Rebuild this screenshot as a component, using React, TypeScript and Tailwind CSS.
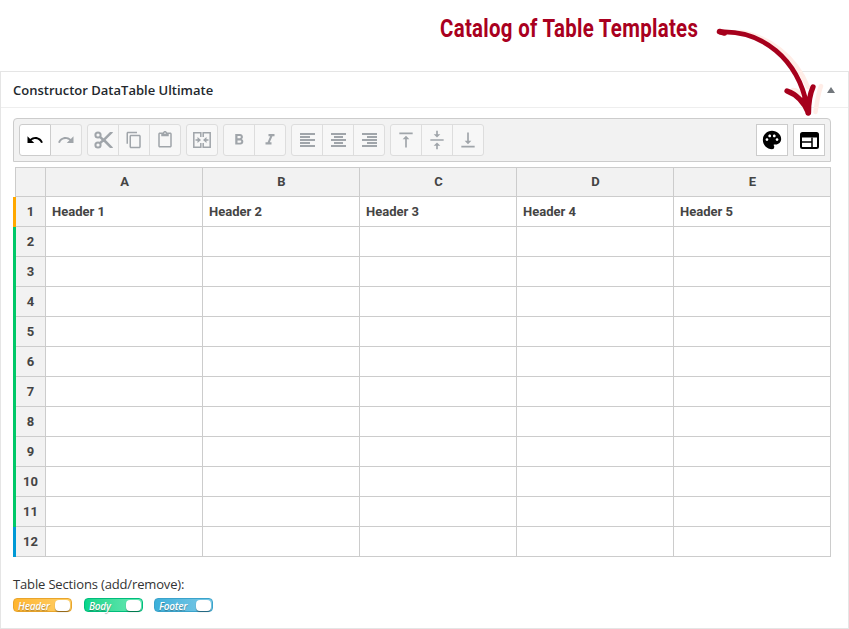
import React from "react";
import { MdUndo, MdRedo, MdContentCopy, MdContentPaste, MdFormatBold, MdFormatItalic, MdPalette, MdVerticalAlignTop, MdVerticalAlignCenter, MdVerticalAlignBottom } from "react-icons/md";

const columns = ["A", "B", "C", "D", "E"];
const rows = Array.from({ length: 12 }, (_, i) => i + 1);

function Group({ children }: { children: React.ReactNode }) {
  return (
    <div className="flex h-8 divide-x divide-[#dddddd] rounded-[3px] border border-[#dddddd] bg-[#f7f7f7] text-[#a0a5aa]">
      {children}
    </div>
  );
}

function Btn({ children }: { children: React.ReactNode }) {
  return <button className="flex w-[31px] items-center justify-center last:w-[30px]">{children}</button>;
}

function Lines({ rows }: { rows: [number, number][] }) {
  return (
    <svg className="ml-px" width="15" height="14" viewBox="0 0 15 14" fill="currentColor" shapeRendering="crispEdges">
      {rows.map(([x, w], i) => (
        <rect key={i} x={x} y={i * 3} width={w} height={2} />
      ))}
    </svg>
  );
}

function Scissors() {
  return (
    <svg className="ml-px" width="19" height="18" viewBox="0 0 19 18" fill="none" stroke="currentColor" strokeWidth="2">
      <circle cx="4" cy="4" r="2.600" />
      <circle cx="4" cy="14" r="2.600" />
      <path d="M6 5.800L10.500 10M6 12.200L9.500 9" strokeWidth="2.400" />
      <path d="M8 9L16 1h2.800v.8L10 10.500zM9.500 10.500l1.800-1.900 7.500 7.600v.8H16z" fill="currentColor" stroke="none" />
    </svg>
  );
}

function Merge() {
  return (
    <svg width="18" height="16" viewBox="0 0 18 16" fill="none" stroke="currentColor" strokeWidth="1.500">
      <path d="M7.800 5V.8H.8v14.400h7V11M10.200 5V.8h7v14.400h-7V11" />
      <path d="M2.500 8H6M15.500 8H12" />
      <path d="M4.500 5l3.500 3-3.500 3zM13.500 5L10 8l3.500 3z" fill="currentColor" stroke="none" />
    </svg>
  );
}

function Layout() {
  return (
    <svg width="19" height="17" viewBox="0 0 19 17" fill="none" stroke="black">
      <rect x="1" y="1" width="17" height="15" rx="1.500" strokeWidth="2" />
      <path d="M1 3.500h17" strokeWidth="4" />
      <path d="M2 10h9.500M12 5.500V15" strokeWidth="1.500" />
    </svg>
  );
}

function Toggle({ label, colors }: { label: string; colors: string }) {
  return (
    <button className={`flex h-[14px] w-[59px] items-center justify-between rounded-[4px] border pl-1 ${colors}`}>
      <span className="pt-px font-['Open_Sans',sans-serif] text-[10px] leading-3 font-semibold tracking-[-0.25px] text-white italic [text-shadow:0_1px_1px_#0005]">{label}</span>
      <span className="mr-px h-[11px] w-[15px] shrink-0 rounded-[4px] bg-white shadow-[0_1px_1px_#0006]" />
    </button>
  );
}

export default function App() {
  return (
    <div className="relative h-[629px] w-[849px] bg-white pt-[71px] font-['Open_Sans',sans-serif]">
      <h1 className="absolute top-[9px] left-[440px] origin-left scale-x-[0.77] font-[Roboto,sans-serif] text-[26.5px] leading-[38px] font-bold tracking-[0.4px] whitespace-nowrap text-[#a90020]">
        Catalog of Table Templates
      </h1>
      <section className="h-[558px] border border-[#e5e5e5]">
        <header className="flex h-9 items-center justify-between border-b border-[#eeeeee] pr-[13px] pl-3">
          <h2 className="pt-[2px] text-[13px] font-semibold text-[#23282d]">Constructor DataTable Ultimate</h2>
          <svg width="8" height="6" viewBox="0 0 8 6" fill="#72777c"><path d="M4 0l4 6H0z" /></svg>
        </header>
        <div className="px-3 pt-[10px]">
          <div className="flex h-11 w-[818px] gap-[5px] rounded-t-[4px] border border-[#cccccc] bg-[#f2f2f2] p-[5px]">
            <div className="flex h-8">
              <button className="flex w-8 items-center justify-center rounded-l-[3px] border border-[#cccccc] bg-white text-black"><MdUndo size={18} /></button>
              <button className="flex w-[31px] items-center justify-center rounded-r-[3px] border border-l-0 border-[#dddddd] bg-[#f7f7f7] text-[#a0a5aa]"><MdRedo size={18} /></button>
            </div>
            <Group><Btn><Scissors /></Btn><Btn><MdContentCopy size={18} /></Btn><Btn><MdContentPaste size={18} /></Btn></Group>
            <Group><Btn><Merge /></Btn></Group>
            <Group><Btn><MdFormatBold size={18} /></Btn><Btn><MdFormatItalic size={18} /></Btn></Group>
            <Group>
              <Btn><Lines rows={[[0, 15], [0, 10], [0, 15], [0, 10], [0, 15]]} /></Btn>
              <Btn><Lines rows={[[0, 15], [3, 9], [0, 15], [3, 9], [0, 15]]} /></Btn>
              <Btn><Lines rows={[[0, 15], [5, 10], [0, 15], [5, 10], [0, 15]]} /></Btn>
            </Group>
            <Group><Btn><MdVerticalAlignTop size={20} /></Btn><Btn><MdVerticalAlignCenter size={20} /></Btn><Btn><MdVerticalAlignBottom size={20} /></Btn></Group>
            <button className="ml-auto flex h-8 w-8 items-center justify-center border border-[#cccccc] bg-white"><MdPalette size={22} /></button>
            <button className="flex h-8 w-8 items-center justify-center border border-[#cccccc] bg-white"><Layout /></button>
          </div>
          <div className="mt-[5px] w-[818px] font-[Roboto,sans-serif] text-[13px] font-bold text-[#444444]">
            <div className="ml-[2px] flex h-[30px] border border-[#cccccc] bg-[#f2f2f2]">
              <div className="w-[30px] border-r border-[#cccccc]" />
              {columns.map((c) => (
                <div key={c} className="flex w-[157px] items-center justify-center border-r border-[#cccccc] pl-px last:w-[156px] last:border-r-0">{c}</div>
              ))}
            </div>
            {rows.map((r) => (
              <div key={r} className="flex h-[30px]">
                <div className={`w-[3px] ${r === 1 ? "bg-[#ffa800]" : r === 12 ? "bg-[#0099d5]" : "bg-[#00c868]"}`} />
                <div className="flex w-[30px] items-center justify-center border-r border-b border-[#cccccc] bg-[#f2f2f2]">{r}</div>
                {columns.map((c, i) => (
                  <div key={c} className="flex w-[157px] items-center border-r border-b border-[#cccccc] pl-[6px]">{r === 1 && `Header ${i + 1}`}</div>
                ))}
              </div>
            ))}
          </div>
          <p className="mt-[17px] text-[13px] leading-5 tracking-[-0.15px] text-[#333333]">Table Sections (add/remove):</p>
          <div className="mt-1 flex gap-[11px]">
            <div className="pr-px">
              <Toggle label="Header" colors="border-[#e9a52c] bg-gradient-to-r from-[#ffb52d] to-[#ffd067]" />
            </div>
            <Toggle label="Body" colors="border-[#00bd7c] bg-gradient-to-r from-[#00d68a] to-[#68e8b6]" />
            <Toggle label="Footer" colors="border-[#3aa3cb] bg-gradient-to-r from-[#3bb0da] to-[#7cc9e6]" />
          </div>
        </div>
      </section>
      <svg className="absolute top-[10px] left-[700px]" width="149" height="120" viewBox="0 0 149 120" fill="none" strokeLinecap="round" strokeLinejoin="round">
        <path d="M40 22C68 26 95 46 108 77M93 80c5 0 9 4 12 8M121 76c-3 8-4 16-5.500 26" stroke="#ffede7" strokeWidth="4.500" />
        <path d="M20 22C62 20 98 49 107 96" stroke="#a6001c" strokeWidth="4.800" />
        <path d="M19.500 21.500l5 1.500" stroke="#a6001c" strokeWidth="5.500" />
        <path d="M87 81c11 4 17 11 21.500 22 0-10 1-18 4.500-26M105 88l3 15" stroke="#a6001c" strokeWidth="5.300" />
      </svg>
    </div>
  );
}
